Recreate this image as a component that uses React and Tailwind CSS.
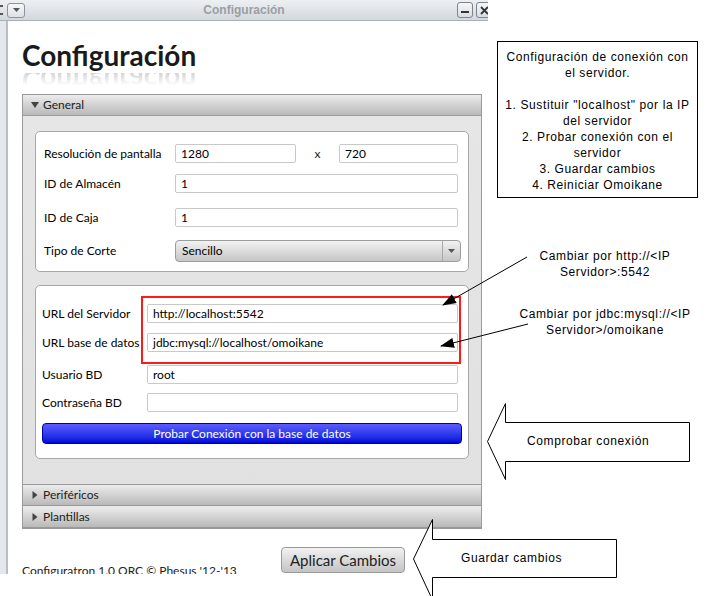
import React from 'react';

const Input = ({ value, className = '' }) => (
  <div className={`h-[19px] bg-white border border-[#c9c9c9] rounded-[2px] px-[5px] flex items-center text-[12px] text-black ${className}`}>
    {value}
  </div>
);

const Row = ({ label, children, className = '', labelW = 'w-[131px]' }) => (
  <div className={`flex items-center ${className}`}>
    <div className={`${labelW} shrink-0 text-[12px] text-black whitespace-nowrap`}>{label}</div>
    {children}
  </div>
);

const SectionHeader = ({ open, label }) => (
  <div className="h-[21px] shrink-0 flex items-center gap-[4px] pl-[8px] bg-gradient-to-b from-[#ececec] to-[#b9b9b9] border-b border-[#9a9a9a] text-[12px] text-[#222]">
    {open ? (
      <svg width="8" height="6" viewBox="0 0 8 6"><path d="M0 0h8L4 6z" fill="#444" /></svg>
    ) : (
      <svg width="8" height="8" viewBox="0 0 8 8"><path d="M1.5 0L6.5 4L1.5 8z" fill="#444" /></svg>
    )}
    {label}
  </div>
);

export default function App() {
  return (
    <div className="relative w-[708px] h-[596px] bg-white overflow-hidden font-['Lato',sans-serif]">
      {/* Window */}
      <div className="w-[488px] h-[574px] flex flex-col overflow-hidden">
        {/* Title bar */}
        <div className="h-[21px] shrink-0 relative flex items-center bg-gradient-to-b from-[#edf0f3] to-[#d3d8de] border-b border-[#a9b0b8]">
          <div className="w-[3px] h-[10px] border-y-2 border-[#555] mr-[4px]" />
          <div className="w-[18px] h-[15px] rounded-[3px] border border-[#8c939b] bg-gradient-to-b from-[#f6f7f9] to-[#dde1e6] flex items-center justify-center">
            <svg width="7" height="4" viewBox="0 0 7 4"><path d="M0 0h7L3.5 4z" fill="#555" /></svg>
          </div>
          <div className="absolute inset-0 flex items-center justify-center text-[12px] font-bold text-[#9a9ea4] font-['Liberation_Sans',sans-serif]">
            Configuración
          </div>
          <div className="ml-auto flex gap-[3px] mr-[-4px]">
            <div className="w-[16px] h-[16px] rounded-[3px] border border-[#7d848c] bg-gradient-to-b from-[#f6f7f9] to-[#d8dce2] flex items-end justify-center pb-[4px]">
              <div className="w-[8px] h-[2px] bg-[#333]" />
            </div>
            <div className="w-[16px] h-[16px] rounded-[3px] border border-[#7d848c] bg-gradient-to-b from-[#f6f7f9] to-[#d8dce2] flex items-center justify-center">
              <svg width="9" height="9" viewBox="0 0 9 9"><path d="M1 1l7 7M8 1L1 8" stroke="#333" strokeWidth="1.8" /></svg>
            </div>
          </div>
        </div>

        <div className="flex flex-1 min-h-0">
          {/* Left frame */}
          <div className="w-[8px] shrink-0 bg-[#e4e8ec] border-r-2 border-[#b8bec6]" />

          {/* Content */}
          <div className="flex-1 pl-[14px] pr-[7px] flex flex-col">
            <div className="shrink-0 mt-[19px] h-[30px] text-[28px] leading-[30px] font-bold text-[#1a1a1a]">
              Configuración
            </div>
            <div className="shrink-0 mt-[3px] h-[12px] overflow-hidden">
              <div className="-scale-y-100 -translate-y-[7px] h-[30px] text-[28px] leading-[30px] font-bold text-transparent bg-clip-text bg-gradient-to-b from-white from-35% to-[#bdbdbd]">
                Configuración
              </div>
            </div>

            {/* Accordion */}
            <div className="shrink-0 mt-[9px] border border-[#9a9a9a] flex flex-col">
              <SectionHeader open label="General" />
              <div className="bg-gradient-to-b from-[#e6e6e6] to-[#e1e1e1] px-[12px] pt-[15px] pb-[25px] border-b border-[#9a9a9a]">
                {/* Panel 1 */}
                <div className="bg-white border border-[#a8a8a8] rounded-[5px] pl-[8px] pr-[10px] pt-[12px] pb-[9px]">
                  <Row label="Resolución de pantalla">
                    <Input value="1280" className="w-[121px]" />
                    <div className="w-[43px] text-center text-[12px] text-[#222]">x</div>
                    <Input value="720" className="w-[119px]" />
                  </Row>
                  <Row label="ID de Almacén" className="mt-[11px]">
                    <Input value="1" className="flex-1" />
                  </Row>
                  <Row label="ID de Caja" className="mt-[15px]">
                    <Input value="1" className="flex-1" />
                  </Row>
                  <Row label="Tipo de Corte" className="mt-[13px]">
                    <div className="flex-1 h-[22px] mr-[-3px] flex rounded-[4px] border border-[#9c9c9c] bg-gradient-to-b from-[#f2f2f2] to-[#c6c6c6] text-[12px]">
                      <div className="flex-1 flex items-center pl-[6px]">Sencillo</div>
                      <div className="w-[18px] border-l border-[#a8a8a8] flex items-center justify-center">
                        <svg width="7" height="4" viewBox="0 0 7 4"><path d="M0 0h7L3.5 4z" fill="#555" /></svg>
                      </div>
                    </div>
                  </Row>
                </div>

                {/* Panel 2 */}
                <div className="relative mt-[13px] bg-white border border-[#a8a8a8] rounded-[5px] pl-[6px] pr-[10px] pt-[18px] pb-[14px]">
                  <Row label="URL del Servidor" labelW="w-[105px]">
                    <Input value="http://localhost:5542" className="flex-1" />
                  </Row>
                  <Row label="URL base de datos" labelW="w-[105px]" className="mt-[10px]">
                    <Input value="jdbc:mysql://localhost/omoikane" className="flex-1" />
                  </Row>
                  <Row label="Usuario BD" labelW="w-[105px]" className="mt-[13px]">
                    <Input value="root" className="flex-1" />
                  </Row>
                  <Row label="Contraseña BD" labelW="w-[105px]" className="mt-[9px]">
                    <Input value="" className="flex-1" />
                  </Row>
                  <div className="mt-[11px] mr-[-4px] h-[21px] rounded-[4px] border border-[#0000a8] bg-gradient-to-b from-[#5b5bff] to-[#0000d8] flex items-center justify-center text-white text-[12px]">
                    Probar Conexión con la base de datos
                  </div>
                  {/* highlight */}
                  <div className="absolute left-[105px] top-[10px] w-[320px] h-[68px] border-2 border-[#ff1a1a]" />
                </div>
              </div>
              <SectionHeader label="Periféricos" />
              <div className="border-t border-[#e8e8e8]">
                <SectionHeader label="Plantillas" />
              </div>
            </div>

            {/* Bottom */}
            <div className="shrink-0 mt-[18px] flex items-start">
              <div className="w-[259px] pt-[15px] text-[12px] text-[#222] whitespace-nowrap">
                Configuratron 1.0 ORC © Phesus '12-'13
              </div>
              <div className="h-[26px] w-[124px] rounded-[4px] border border-[#9a9a9a] bg-gradient-to-b from-[#f2f2f2] to-[#c4c4c4] flex items-center justify-center text-[15px] text-[#222]">
                Aplicar Cambios
              </div>
            </div>
          </div>
        </div>
      </div>

      {/* Annotations */}
      <svg className="absolute inset-0 pointer-events-none" width="708" height="596" viewBox="0 0 708 596">
        <defs>
          <marker id="ah" markerWidth="14" markerHeight="10" refX="13" refY="5" orient="auto" markerUnits="userSpaceOnUse">
            <path d="M0 0L14 5L0 10z" fill="#000" />
          </marker>
        </defs>
        <line x1="527" y1="257" x2="443" y2="305" stroke="#000" strokeWidth="1" markerEnd="url(#ah)" />
        <line x1="528" y1="324" x2="441" y2="346" stroke="#000" strokeWidth="1" markerEnd="url(#ah)" />
        <path d="M505.5 403.5V422.5H689.5V461.5H505.5V479.5L487.5 441.5Z" fill="#fff" stroke="#000" strokeWidth="1" />
        <path d="M432.5 519.5V539.5H616.5V577.5H432.5V600L413.5 559Z" fill="#fff" stroke="#000" strokeWidth="1" />
      </svg>

      <div className="absolute left-[497px] top-[41px] w-[201px] h-[157px] border border-black bg-white pt-[7px] text-center text-[12px] leading-[16px] tracking-[0.6px] text-black font-['Liberation_Sans',sans-serif]">
        <div>Configuración de conexión con</div>
        <div>el servidor.</div>
        <div className="h-[16px]" />
        <div>1. Sustituir "localhost" por la IP</div>
        <div>del servidor</div>
        <div>2. Probar conexión con el</div>
        <div>servidor</div>
        <div>3. Guardar cambios</div>
        <div>4. Reiniciar Omoikane</div>
      </div>

      <div className="absolute left-[515px] top-[248px] w-[180px] text-center text-[12px] leading-[16px] tracking-[0.6px] text-black font-['Liberation_Sans',sans-serif]">
        Cambiar por http://&lt;IP<br />Servidor&gt;:5542
      </div>
      <div className="absolute left-[510px] top-[306px] w-[190px] text-center text-[12px] leading-[16px] tracking-[0.6px] text-black font-['Liberation_Sans',sans-serif]">
        Cambiar por jdbc:mysql://&lt;IP<br />Servidor&gt;/omoikane
      </div>
      <div className="absolute left-[527px] top-[433px] text-[12px] leading-[16px] tracking-[0.6px] text-black font-['Liberation_Sans',sans-serif]">
        Comprobar conexión
      </div>
      <div className="absolute left-[461px] top-[550px] text-[12px] leading-[16px] tracking-[0.6px] text-black font-['Liberation_Sans',sans-serif]">
        Guardar cambios
      </div>
    </div>
  );
}
